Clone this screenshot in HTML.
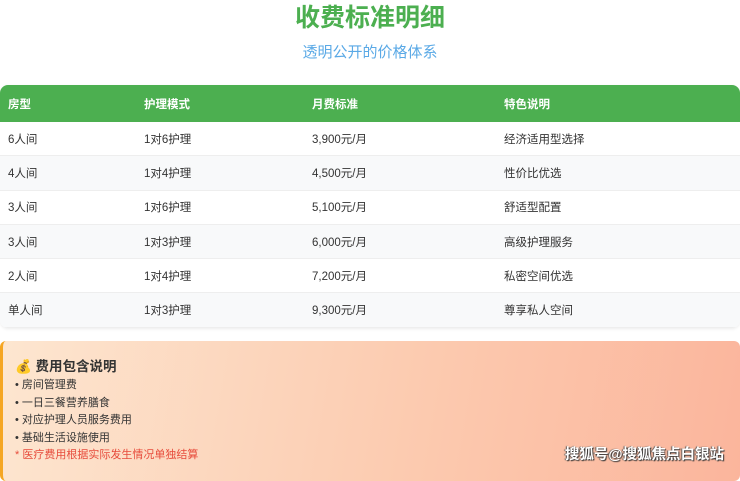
<!DOCTYPE html>
<html><head><meta charset="utf-8"><style>
body{margin:0;width:740px;height:471px;overflow:hidden;background:#fff;font-family:"Liberation Sans","Noto Sans CJK SC",sans-serif;position:relative}
h1{position:absolute;top:1px;left:0;width:740px;margin:0;text-align:center;color:#4caf50;font-size:25px;line-height:34px;font-weight:bold}
.sub{position:absolute;top:42px;width:740px;text-align:center;color:#5aa9e6;font-size:15px;line-height:22px}
.tbl{position:absolute;top:85px;left:0;width:740px;border-radius:8px;overflow:hidden;box-shadow:0 1px 3px rgba(0,0,0,.08)}
.row{height:34.3px;display:flex;align-items:center;font-size:11.5px;color:#333;border-bottom:1px solid #eee;box-sizing:border-box;position:relative}
.row.h{height:37px;background:#4caf50;color:#fff;font-weight:bold;border:none}
.row span{position:absolute}
.c1{left:8px}.c2{left:144px}.c3{left:312px}.c4{left:504px}
.box{position:absolute;top:341px;left:0;width:740px;height:140px;border-radius:6px;border-left:3px solid #f5a623;box-sizing:border-box;background:linear-gradient(100deg,#fde6d0 0%,#fccbb0 55%,#fbb59c 100%)}
.box .t{position:absolute;left:12px;top:14px;font-size:13.5px;font-weight:bold;color:#333}
.box .l{position:absolute;left:12px;font-size:11px;color:#333}
.red{color:#e74c3c!important}
.wm{position:absolute;right:16px;bottom:7px;color:#fff;font-size:14.5px;font-weight:bold;text-shadow:1px 1px 1px #333,-1px 0 1px #555}
</style></head><body>
<h1>收费标准明细</h1>
<div class="sub">透明公开的价格体系</div>
<div class="tbl">
<div class="row h"><span class="c1">房型</span><span class="c2">护理模式</span><span class="c3">月费标准</span><span class="c4">特色说明</span></div>
<div class="row" style="background:#fff"><span class="c1">6人间</span><span class="c2">1对6护理</span><span class="c3">3,900元/月</span><span class="c4">经济适用型选择</span></div>
<div class="row" style="background:#f8f9fa"><span class="c1">4人间</span><span class="c2">1对4护理</span><span class="c3">4,500元/月</span><span class="c4">性价比优选</span></div>
<div class="row" style="background:#fff"><span class="c1">3人间</span><span class="c2">1对6护理</span><span class="c3">5,100元/月</span><span class="c4">舒适型配置</span></div>
<div class="row" style="background:#f8f9fa"><span class="c1">3人间</span><span class="c2">1对3护理</span><span class="c3">6,000元/月</span><span class="c4">高级护理服务</span></div>
<div class="row" style="background:#fff"><span class="c1">2人间</span><span class="c2">1对4护理</span><span class="c3">7,200元/月</span><span class="c4">私密空间优选</span></div>
<div class="row" style="background:#f8f9fa"><span class="c1">单人间</span><span class="c2">1对3护理</span><span class="c3">9,300元/月</span><span class="c4">尊享私人空间</span></div>
</div>
<div class="box">
<div class="t">💰 费用包含说明</div>
<div class="l" style="top:35px">• 房间管理费</div>
<div class="l" style="top:53px">• 一日三餐营养膳食</div>
<div class="l" style="top:70px">• 对应护理人员服务费用</div>
<div class="l" style="top:88px">• 基础生活设施使用</div>
<div class="l red" style="top:105px">* 医疗费用根据实际发生情况单独结算</div>
</div>
<div class="wm">搜狐号@搜狐焦点白银站</div>
</body></html>
